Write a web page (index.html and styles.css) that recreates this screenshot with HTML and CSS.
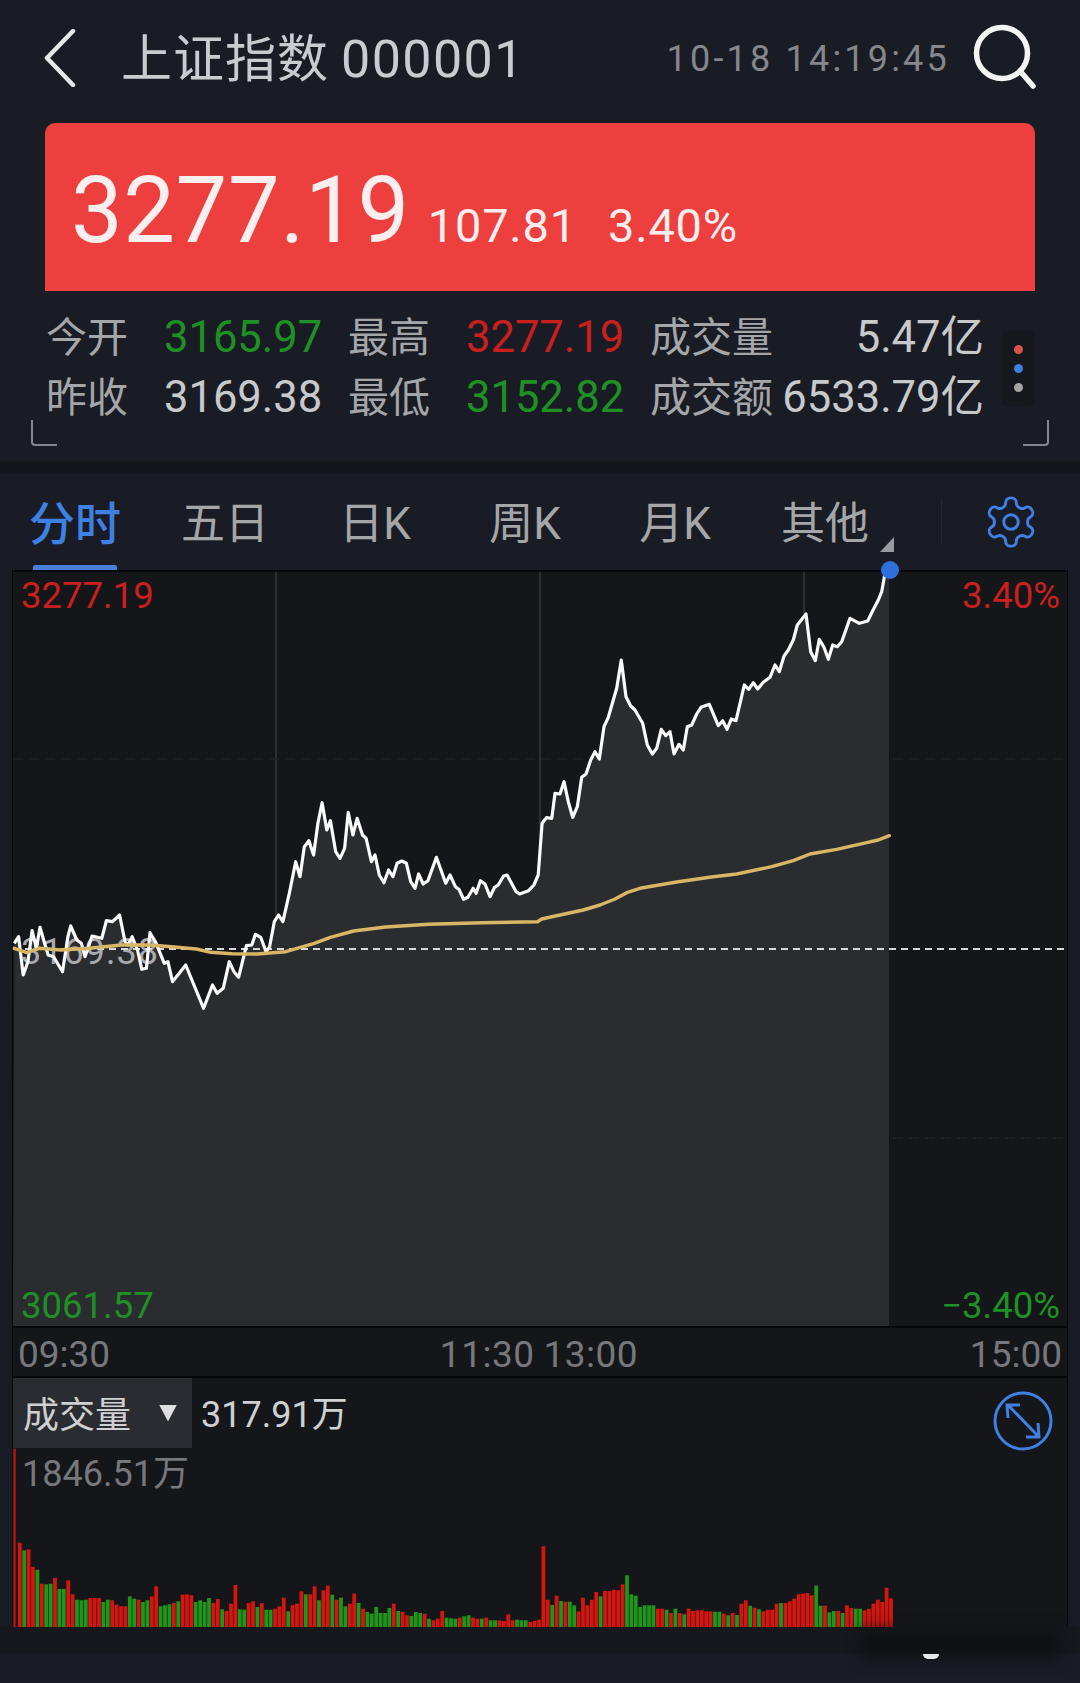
FILE: index.html
```html
<!DOCTYPE html>
<html lang="zh-CN">
<head>
    <meta charset="UTF-8">
    <meta name="viewport" content="width=device-width, initial-scale=1.0">
    <title>上证指数 000001</title>
    <link rel="stylesheet" href="styles.css">
</head>
<body>
    <header class="top-bar">
        <svg class="back-icon" width="32" height="58" viewBox="0 0 32 58">
            <path d="M29 2 L3 29 L29 56"/>
        </svg>
        <h1 class="title"><span>上证指数</span><span class="code">000001</span></h1>
        <div class="clock">10-18 14:19:45</div>
        <svg class="search-icon" width="66" height="66" viewBox="0 0 66 66">
            <circle cx="29" cy="29" r="25.5"/>
            <path d="M47 47 L60 62"/>
        </svg>
    </header>

    <section class="price-card">
        <span class="price">3277.19</span>
        <span class="change">107.81</span>
        <span class="change pct">3.40%</span>
    </section>

    <section class="stats">
        <span class="stat-label">今开</span><span class="stat-value green">3165.97</span>
        <span class="stat-label">最高</span><span class="stat-value red">3277.19</span>
        <span class="stat-label">成交量</span><span class="stat-value end">5.47亿</span>
        <div class="dots"><i class="dot-red"></i><i class="dot-blue"></i><i class="dot-gray"></i></div>
        <span class="stat-label">昨收</span><span class="stat-value">3169.38</span>
        <span class="stat-label">最低</span><span class="stat-value green">3152.82</span>
        <span class="stat-label">成交额</span><span class="stat-value end">6533.79亿</span>
    </section>
    <div class="corners"><i class="corner-left"></i><i class="corner-right"></i></div>

    <nav class="tabs">
        <div class="tab active">分时</div>
        <div class="tab">五日</div>
        <div class="tab">日K</div>
        <div class="tab">周K</div>
        <div class="tab">月K</div>
        <div class="tab more">其他</div>
        <div class="tab-divider"></div>
        <svg class="gear-icon" width="58" height="58" viewBox="0 0 24 24">
            <path d="M12.22 2h-.44a2 2 0 0 0-2 2v.18a2 2 0 0 1-1 1.73l-.43.25a2 2 0 0 1-2 0l-.15-.08a2 2 0 0 0-2.73.73l-.22.38a2 2 0 0 0 .73 2.73l.15.1a2 2 0 0 1 1 1.72v.51a2 2 0 0 1-1 1.74l-.15.09a2 2 0 0 0-.73 2.73l.22.38a2 2 0 0 0 2.73.73l.15-.08a2 2 0 0 1 2 0l.43.25a2 2 0 0 1 1 1.73V20a2 2 0 0 0 2 2h.44a2 2 0 0 0 2-2v-.18a2 2 0 0 1 1-1.73l.43-.25a2 2 0 0 1 2 0l.15.08a2 2 0 0 0 2.73-.73l.22-.39a2 2 0 0 0-.73-2.73l-.15-.08a2 2 0 0 1-1-1.74v-.5a2 2 0 0 1 1-1.74l.15-.09a2 2 0 0 0 .73-2.73l-.22-.38a2 2 0 0 0-2.73-.73l-.15.08a2 2 0 0 1-2 0l-.43-.25a2 2 0 0 1-1-1.73V4a2 2 0 0 0-2-2z"/>
            <circle cx="12" cy="12" r="3"/>
        </svg>
    </nav>

    <main class="chart">
        <div class="plot">
            <svg class="plot-svg" width="1054" height="754" viewBox="13 572 1054 754">
                <g class="grid">
                    <path d="M276 572V1326M540 572V1326M804 572V1326"/>
                    <path class="grid-dash" d="M13 759H1067M13 1138H1067"/>
                </g>
                <polygon id="price-fill" class="price-fill"/>
                <text class="pre-close" x="21" y="964">3169.38</text>
                <path class="base-line" d="M13 949H1067"/>
                <polyline id="price-line" class="price-line"/>
                <polyline id="avg-line" class="avg-line"/>
                <circle class="now-dot" cx="890" cy="570" r="9"/>
            </svg>
            <span class="plot-label top-left red">3277.19</span>
            <span class="plot-label top-right red">3.40%</span>
            <span class="plot-label bottom-left green">3061.57</span>
            <span class="plot-label bottom-right green">−3.40%</span>
        </div>

        <div class="time-axis">
            <span>09:30</span>
            <span class="mid-times"><span>11:30</span><span>13:00</span></span>
            <span>15:00</span>
        </div>

        <div class="volume">
            <svg id="volume-bars" class="volume-svg" width="1054" height="249" viewBox="13 1378 1054 249"></svg>
            <div class="volume-head">
                <div class="volume-select">成交量<i class="select-arrow"></i></div>
                <span class="volume-now">317.91万</span>
            </div>
            <div class="volume-max">1846.51万</div>
            <svg class="expand-icon" width="60" height="60" viewBox="0 0 60 60">
                <circle cx="30" cy="30" r="28"/>
                <path d="M15 14 L45 45 M15 27 L14 14 L27 14 M45 32 L46 46 L33 46"/>
            </svg>
        </div>
    </main>

    <footer class="bottom-strip">
        <div class="smudge"></div>
        <div class="smudge-mark"></div>
    </footer>

    <script src="chart.js"></script>
</body>
</html>
```

FILE: styles.css
```css
:root {
    --page-bg: #1a1c25;
    --panel-bg: #15161a;
    --fill-bg: #2b2c30;
    --line-black: #07080b;
    --blue: #3e80e4;
    --red: #c9201e;
    --green: #1f9124;
    --muted: #77787d;
}

* {
    box-sizing: border-box;
}

html, body {
    margin: 0;
    padding: 0;
}

body {
    width: 1080px;
    height: 1683px;
    overflow: hidden;
    background-color: var(--page-bg);
    font-family: Roboto, "Noto Sans CJK SC", sans-serif;
    color: #c8c9cc;
}

.red { color: var(--red); }
.green { color: var(--green); }

.top-bar {
    display: flex;
    align-items: center;
    height: 114px;
    margin-bottom: 9px;
    padding-left: 44px;
}

.back-icon {
    margin-top: 2px;
}

.back-icon path {
    fill: none;
    stroke: #e6e7e9;
    stroke-width: 4.5;
    stroke-linecap: round;
    stroke-linejoin: round;
}

.title {
    display: flex;
    gap: 12px;
    margin: 5px 0 0 45px;
    font-size: 51px;
    font-weight: 400;
    line-height: 1;
    color: #c9cbcf;
    letter-spacing: 1px;
    white-space: nowrap;
}

.code {
    font-size: 52px;
    letter-spacing: 1.4px;
}

.clock {
    margin: 4px 0 0 auto;
    font-size: 36px;
    letter-spacing: 3.2px;
    color: #85878d;
    white-space: nowrap;
}

.search-icon {
    margin: 0 41px 0 23px;
}

.search-icon circle,
.search-icon path {
    fill: none;
    stroke: #f4f4f5;
    stroke-width: 5.5;
    stroke-linecap: round;
}

.price-card {
    display: flex;
    align-items: baseline;
    height: 168px;
    margin: 0 45px;
    padding: 42px 0 0 26px;
    background-color: #ee3f3f;
    border-radius: 10px 10px 0 0;
    color: #fbeeee;
}

.price {
    font-size: 92px;
    line-height: 1;
    letter-spacing: .6px;
}

.change {
    margin-left: 18px;
    font-size: 47px;
    line-height: 1;
    letter-spacing: .8px;
}

.change.pct {
    margin-left: 31px;
    font-size: 47px;
}

.stats {
    display: grid;
    grid-template-columns: 118px 184px 118px 184px 123px 211px 51px;
    grid-auto-rows: 44px;
    row-gap: 16px;
    padding: 25px 0 0 46px;
    font-size: 41px;
    line-height: 44px;
    white-space: nowrap;
}

.stat-label {
    color: #a5a6a9;
}

.stat-value {
    font-size: 43.5px;
}

.stat-value.end {
    text-align: right;
}

.dots {
    grid-column: 7;
    grid-row: 1 / 3;
    align-self: center;
    justify-self: end;
    display: flex;
    flex-direction: column;
    align-items: center;
    justify-content: center;
    gap: 10px;
    width: 33px;
    height: 75px;
    background-color: #16181e;
    border-radius: 5px;
}

.dots i {
    width: 9px;
    height: 9px;
    border-radius: 50%;
}

.dot-red { background-color: #d6544a; }
.dot-blue { background-color: #3f7fe0; }
.dot-gray { background-color: #a3a3a3; }

.corners {
    display: flex;
    justify-content: space-between;
    height: 26px;
    margin: 0 31px 16px;
}

.corners i {
    width: 26px;
    height: 26px;
    border-bottom: 2px solid #85878c;
}

.corner-left {
    border-left: 2px solid #85878c;
    border-bottom-left-radius: 4px;
}

.corner-right {
    border-right: 2px solid #85878c;
    border-bottom-right-radius: 4px;
}

.tabs {
    display: flex;
    align-items: center;
    height: 108px;
    border-top: 11px solid #14161c;
}

.tab {
    position: relative;
    width: 150px;
    height: 97px;
    padding-top: 3px;
    font-size: 44px;
    line-height: 97px;
    text-align: center;
    color: #a5a6a9;
}

.tab.active {
    color: var(--blue);
    font-size: 46px;
    font-weight: 500;
}

.tab.active::after {
    content: "";
    position: absolute;
    left: 33px;
    bottom: 0;
    width: 84px;
    height: 5px;
    background-color: #4a7fdc;
    border-radius: 2px 2px 0 0;
}

.tab.more::after {
    content: "";
    position: absolute;
    right: 6px;
    bottom: 18px;
    border-style: solid;
    border-width: 0 0 15px 14px;
    border-color: transparent transparent #9a9b9f transparent;
}

.tab-divider {
    width: 1px;
    height: 46px;
    margin-left: 41px;
    background-color: #24262f;
}

.gear-icon {
    margin-left: 40px;
}

.gear-icon path,
.gear-icon circle {
    fill: none;
    stroke: var(--blue);
    stroke-width: 1.2;
}

.chart {
    width: 1056px;
    margin-left: 12px;
    background-color: var(--panel-bg);
    border-left: 1px solid var(--line-black);
    border-right: 1px solid var(--line-black);
}

.plot {
    position: relative;
    height: 756px;
    border-top: 2px solid var(--line-black);
}

.plot-svg {
    display: block;
    overflow: visible;
}

.grid path {
    fill: none;
    stroke: #37383c;
    stroke-width: 1.5;
}

.grid .grid-dash {
    stroke: #212226;
    stroke-dasharray: 10 6;
}

.price-fill {
    fill: var(--fill-bg);
}

.pre-close {
    font-size: 36px;
    fill: #a9aaad;
    letter-spacing: 1px;
}

.base-line {
    fill: none;
    stroke: #d8d8d8;
    stroke-width: 2;
    stroke-dasharray: 7 5;
}

.price-line {
    fill: none;
    stroke: #fafafa;
    stroke-width: 3.2;
    stroke-linejoin: round;
}

.avg-line {
    fill: none;
    stroke: #d9b665;
    stroke-width: 3.4;
    stroke-linejoin: round;
    stroke-linecap: round;
}

.now-dot {
    fill: #2f6fdc;
}

.plot-label {
    position: absolute;
    font-size: 36.5px;
    line-height: 40px;
}

.top-left { left: 8px; top: 4px; }
.top-right { right: 7px; top: 4px; }
.bottom-left { left: 8px; bottom: 0; }
.bottom-right { right: 7px; bottom: 0; }

.time-axis {
    display: flex;
    align-items: center;
    justify-content: space-between;
    height: 50px;
    padding: 5px 5px 0 5px;
    border-top: 2px solid var(--line-black);
    font-size: 37px;
    color: var(--muted);
}

.mid-times {
    display: flex;
    gap: 9px;
    margin-left: -2px;
    letter-spacing: .5px;
}

.volume {
    position: relative;
    height: 251px;
    border-top: 2px solid var(--line-black);
}

.volume-svg {
    position: absolute;
    left: 0;
    top: 0;
}

.volume-head {
    position: relative;
    display: flex;
    align-items: center;
}

.volume-select {
    display: flex;
    align-items: center;
    width: 179px;
    height: 70px;
    padding: 0 0 2px 10px;
    background-color: #2b2c31;
    font-size: 36px;
    color: #cfd0d2;
}

.select-arrow {
    width: 18px;
    height: 17px;
    margin: 2px 0 0 28px;
    background-color: #dfdfe1;
    clip-path: polygon(0 0, 100% 0, 50% 100%);
}

.volume-now {
    margin: -4px 0 0 9px;
    font-size: 36px;
    color: #cfd0d2;
}

.volume-max {
    position: relative;
    margin: 6px 0 0 9px;
    font-size: 36px;
    line-height: 40px;
    color: var(--muted);
}

.expand-icon {
    position: absolute;
    left: 980px;
    top: 13px;
}

.expand-icon circle,
.expand-icon path {
    fill: none;
    stroke: var(--blue);
    stroke-width: 3;
}

.bottom-strip {
    position: relative;
    height: 26px;
    background-color: #16181e;
}

.smudge {
    position: absolute;
    left: 860px;
    top: 2px;
    width: 200px;
    height: 30px;
    background-color: #101115;
    filter: blur(7px);
}

.smudge-mark {
    position: absolute;
    left: 923px;
    top: 27px;
    width: 16px;
    height: 5px;
    background-color: #e8e8e8;
    border-radius: 0 0 8px 8px;
}
```

FILE: chart.js
```js
// traced points, x/y in zoomed crop coordinates, turned into page coordinates below
const firstPart = [[40,490],[52,470],[65,585],[78,545],[90,452],[102,505],[112,442],[125,490],[135,525],[150,530],[175,575],[190,470],[198,438],[215,480],[228,490],[238,530],[258,468],[285,475],[298,422],[315,425],[335,405],[350,485],[358,495],[370,470],[385,510],[397,568],[410,565],[420,458],[435,485],[460,550],[470,545],[483,605],[520,555],[570,685],[595,615],[608,640],[625,625],[642,545],[655,575],[668,592],[690,497],[705,495],[715,463],[730,472],[745,515],[755,500],[768,425],[780,405],[792,425],[810,340],[828,245],[840,290],[852,200],[865,182],[878,225],[890,130],[902,68],[915,150],[925,122],[940,215],[952,235],[965,205],[975,97],[988,165],[1000,115],[1015,165],[1025,175],[1040,245],[1050,225],[1062,285],[1075,308],[1088,270],[1100,290],[1112,250],[1125,243],[1138,250],[1150,305],[1162,325],[1172,282],[1185,312],[1198,302],[1222,232],[1248,310],[1260,285],[1275,320],[1285,328],[1298,358],[1310,352],[1325,325],[1333,340],[1345,302],[1358,312],[1372,350],[1385,322],[1395,315],[1410,288],[1420,285],[1445,335],[1455,342],[1480,332],[1495,315],[1507,285],[1518,130],[1530,113],[1545,115]];
const secondPart = [[165,670],[180,672],[192,635],[205,695],[218,742],[232,710],[245,622],[258,612],[272,570],[285,545],[298,567],[312,470],[325,442],[350,355],[364,270],[378,380],[392,408],[405,420],[428,460],[442,525],[457,552],[470,535],[484,478],[497,497],[510,485],[522,552],[537,523],[550,540],[562,470],[575,465],[590,432],[603,412],[628,403],[655,467],[668,452],[681,478],[694,447],[708,452],[733,345],[746,358],[760,338],[773,357],[790,337],[810,322],[825,285],[838,305],[852,258],[865,240],[880,210],[892,165],[918,132],[932,245],[946,272],[958,208],[972,232],[985,268],[998,225],[1012,230],[1025,215],[1050,145],[1078,160],[1103,153],[1118,122],[1135,90],[1145,65],[1155,10]];
const avgFirst = [[40,505],[75,518],[110,505],[170,510],[250,505],[340,495],[420,495],[480,500],[550,507],[590,517],[650,521],[720,522],[800,515],[880,490],[925,472],[990,453],[1080,441],[1200,433],[1350,428],[1505,425]];
const avgSecond = [[125,1047],[180,1035],[250,1020],[300,1005],[345,987],[380,968],[420,955],[530,936],[640,920],[710,912],[815,890],[880,872],[930,852],[1010,838],[1100,818],[1135,810],[1168,797]];

const fromFirst = ([x, y]) => [x / 2.8, 780 + y / 3];
const fromSecond = ([x, y]) => [500 + x / 3, 570 + y / 3];
const toPoints = (list) => list.map(([x, y]) => `${x.toFixed(1)},${y.toFixed(1)}`).join(' ');

const pricePoints = [...firstPart.map(fromFirst), ...secondPart.map(fromSecond), [889, 571]];
const avgPoints = [...avgFirst.map(fromFirst), ...avgSecond.map(fromSecond)];

document.getElementById('price-line').setAttribute('points', toPoints(pricePoints));
document.getElementById('avg-line').setAttribute('points', toPoints(avgPoints));
document.getElementById('price-fill').setAttribute('points', toPoints([[13, 1326], ...pricePoints, [889, 1326]]));

// one bar per minute: top of the bar in crop pixels, r or g
const volumes = '415r 697r 720g 717r 770r 778g 820r 822g 820g 803r 836g 836g 810r 852r 868g 870g 868g 863r 863r 863r 875g 868g 870r 883r 888r 888r 858g 865g 868r 875g 870g 858r 828r 888g 885g 882g 878r 873g 853r 852r 855r 875g 870g 875g 863g 878r 866r 897g 902r 880r 824r 897g 898g 878r 873r 890g 878r 898g 898g 895r 888r 862r 903g 885r 880r 843r 852g 852r 828r 870g 840r 826r 853g 868r 862g 888g 880r 850r 878g 895r 905g 910g 890g 908g 908g 893g 880r 902g 905r 915r 917g 905g 908g 910r 925g 930r 925r 902r 922g 924g 925g 922r 918g 915g 922r 925r 925g 922r 930g 930g 930r 932r 912r 930r 928g 930g 930g 935r 932r 928r 708r 868r 884g 856r 872g 874r 874g 885g 903r 862r 885r 868r 845r 858g 842r 842r 838r 840r 822r 795g 852g 856g 890g 885g 885g 885g 895r 895r 898g 908r 895g 908r 912g 895r 902r 900r 900r 903r 903r 904g 904g 910r 915g 908r 914g 880r 870r 886g 892r 897g 903r 898r 898r 880r 878g 878r 873r 865r 852r 850r 848r 855r 826g 886g 886r 906g 902g 902r 908g 885r 893r 895g 895g 900r 895r 880r 868r 875r 832r 864r'.split(' ');

const bars = volumes.map((item, i) => {
    const top = parseInt(item);
    const kind = item.slice(-1);
    const height = (950 - top) / 3;
    const width = i === 0 ? 2 : 3.8;
    return `<rect class="bar-${kind}" x="${(13.5 + i * 4.4).toFixed(1)}" y="${(1627 - height).toFixed(1)}" width="${width}" height="${height.toFixed(1)}"/>`;
});
document.getElementById('volume-bars').innerHTML = `<style>.bar-r{fill:#d5150f}.bar-g{fill:#1f951a}</style>` + bars.join('');
```
